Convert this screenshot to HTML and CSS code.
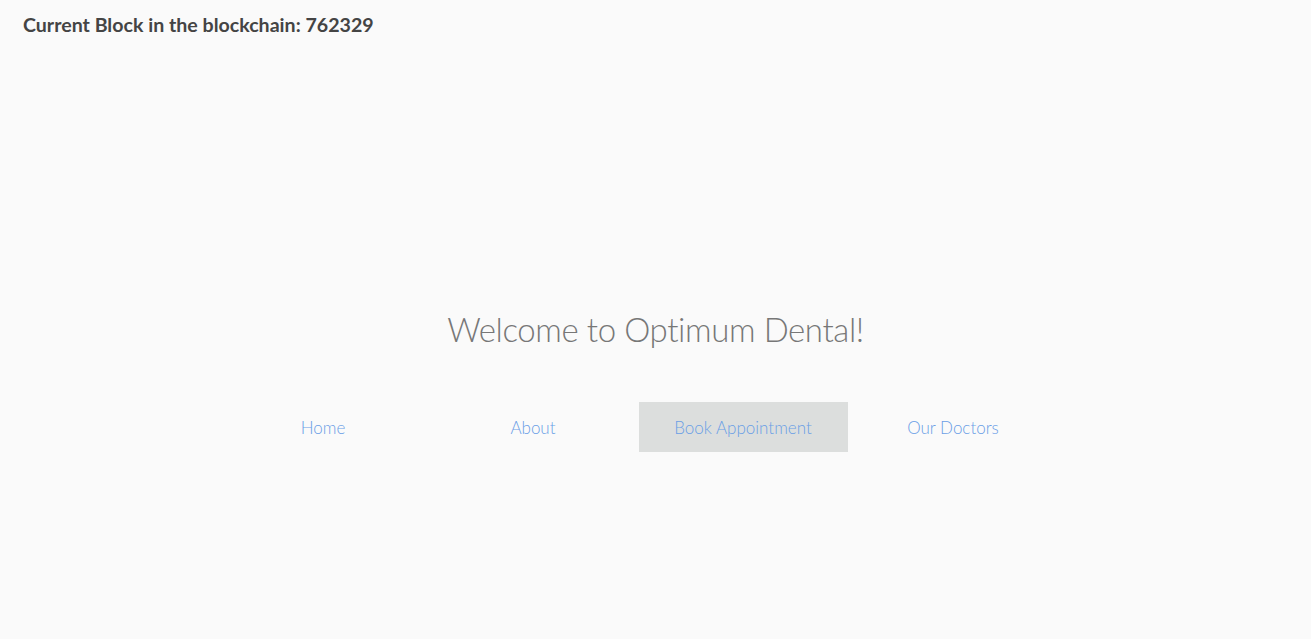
FILE: index.html
```html
<!DOCTYPE html>
<html>
<head>
<meta charset="utf-8">
<link rel="stylesheet" href="styles.css">
</head>
<body>
<header class="topbar">
  <h3 class="block-info">Current Block in the blockchain: 762329</h3>
</header>
<main class="hero">
  <h1 class="title">Welcome to Optimum Dental!</h1>
  <nav class="nav">
    <a class="nav-item" href="#">Home</a>
    <a class="nav-item" href="#">About</a>
    <a class="nav-item active" href="#">Book Appointment</a>
    <a class="nav-item" href="#">Our Doctors</a>
  </nav>
</main>
</body>
</html>
```
FILE: styles.css
```css
html, body {
  margin: 0;
  padding: 0;
  background: #fafafa;
  font-family: Lato, "Open Sans", sans-serif;
}
.topbar {
  padding: 13px 23px 0;
}
.block-info {
  margin: 0;
  font-size: 19.6px;
  font-weight: 700;
  color: #444444;
  line-height: 24px;
}
.hero {
  display: flex;
  flex-direction: column;
  align-items: center;
}
.title {
  margin: 270px 0 0;
  font-size: 33px;
  font-weight: 300;
  letter-spacing: -0.4px;
  color: #777777;
  line-height: 44px;
}
.nav {
  display: flex;
  justify-content: center;
  align-self: stretch;
  padding-right: 35px;
  margin-top: 51px;
}
.nav-item {
  width: 209px;
  height: 50px;
  display: flex;
  align-items: center;
  justify-content: center;
  font-size: 17px;
  font-weight: 300;
  color: #6a9ee6;
  text-decoration: none;
}
.nav-item + .nav-item {
  margin-left: 1px;
}
.nav-item.active {
  background: #dcdedd;
}
```
